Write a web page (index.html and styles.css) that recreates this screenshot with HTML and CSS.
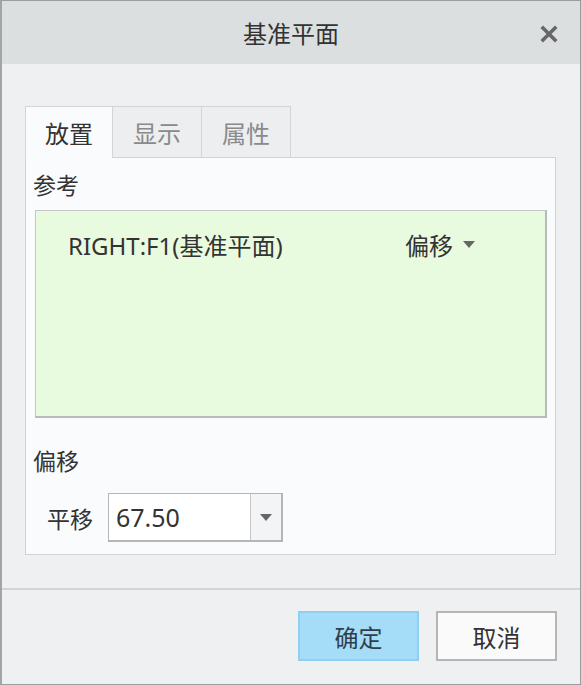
FILE: index.html
```html
<!DOCTYPE html>
<html>
<head>
<meta charset="utf-8">
<link rel="stylesheet" href="styles.css">
</head>
<body>
<div class="dialog">
  <div class="titlebar">
    <span class="title">基准平面</span>
    <span class="close">
      <svg width="18" height="18" viewBox="0 0 18 18"><path d="M3 3 L15 15 M15 3 L3 15" stroke="#676767" stroke-width="3.6" stroke-linecap="square"/></svg>
    </span>
  </div>
  <div class="content">
    <div class="tabs">
      <div class="tab active">放置</div>
      <div class="tab">显示</div>
      <div class="tab">属性</div>
    </div>
    <div class="panel">
      <div class="label">参考</div>
      <div class="refbox">
        <div class="refrow">
          <span class="refname">RIGHT:F1(基准平面)</span>
          <span class="refmode">偏移 <span class="tri"></span></span>
        </div>
      </div>
      <div class="label offset-label">偏移</div>
      <div class="offset-row">
        <span class="offset-name">平移</span>
        <div class="combo">
          <span class="combo-value">67.50</span>
          <span class="combo-btn"><span class="tri"></span></span>
        </div>
      </div>
    </div>
  </div>
  <div class="footer">
    <button class="btn primary">确定</button>
    <button class="btn">取消</button>
  </div>
</div>
</body>
</html>
```
FILE: styles.css
```css
* { box-sizing: border-box; }
html, body { margin: 0; padding: 0; }
body {
  width: 581px;
  height: 685px;
  font-family: "Noto Sans", "Noto Sans CJK SC", sans-serif;
  color: #333;
  background: #eff0f2;
}
.dialog {
  width: 581px;
  height: 685px;
  border: 1px solid #9c9c9c;
  border-left: 2px solid #a4a4a4;
  display: flex;
  flex-direction: column;
  background: #eff0f2;
}
.titlebar {
  height: 63px;
  flex: none;
  background: #dcdfe0;
  display: flex;
  align-items: center;
  justify-content: center;
  position: relative;
}
.title {
  font-family: "Noto Sans CJK SC", sans-serif;
  font-size: 24px;
  color: #333;
}
.close {
  position: absolute;
  right: 22px;
  top: 24px;
  width: 18px;
  height: 18px;
  display: block;
}
.close svg { display: block; }
.content {
  flex: none;
  padding: 42px 23px 0 23px;
}
.tabs {
  display: flex;
  height: 51px;
  position: relative;
  z-index: 1;
}
.tab {
  width: 90px;
  height: 51px;
  border: 1px solid #d2d4d6;
  border-bottom: none;
  margin-right: -1px;
  background: #eceef0;
  color: #8a8a8a;
  font-family: "Noto Sans CJK SC", sans-serif;
  font-size: 24px;
  display: flex;
  align-items: center;
  justify-content: center;
}
.tab:first-child { width: 88px; }
.tab.active {
  background: #fafbfc;
  color: #333;
  height: 52px;
}
.panel {
  height: 398px;
  background: #fafbfc;
  border: 1px solid #d0d2d4;
  margin-right: 1px;
  padding: 9px 8px 0 9px;
}
.label {
  font-family: "Noto Sans CJK SC", sans-serif;
  font-size: 23px;
  color: #333;
  height: 34px;
  line-height: 34px;
  margin-left: -2px;
}
.refbox {
  margin-top: 9px;
  height: 208px;
  background: #e9fbdf;
  border-style: solid;
  border-width: 1px 2px 2px 1px;
  border-color: #c4c6c7 #b7b9ba #b7b9ba #c4c6c7;
  padding: 17px 0 0 32px;
}
.refrow {
  display: flex;
  align-items: center;
  height: 32px;
  font-size: 24px;
  color: #333;
}
.refname {
  width: 337px;
  font-family: "Noto Sans", "Noto Sans CJK SC", sans-serif;
}
.refmode {
  font-family: "Noto Sans CJK SC", sans-serif;
  display: flex;
  align-items: center;
  gap: 10px;
}
.tri {
  display: inline-block;
  width: 0;
  height: 0;
  border-left: 6px solid transparent;
  border-right: 6px solid transparent;
  border-top: 7px solid #666;
}
.offset-label {
  margin-top: 25px;
}
.offset-row {
  display: flex;
  align-items: center;
  margin-top: 16px;
  padding-left: 12px;
}
.offset-name {
  font-family: "Noto Sans CJK SC", sans-serif;
  font-size: 23px;
  width: 61px;
  color: #333;
}
.combo {
  display: flex;
  width: 175px;
  height: 49px;
  border-style: solid;
  border-width: 1px 2px 2px 1px;
  border-color: #b3b5b7;
  background: #fff;
}
.combo-value {
  flex: 1;
  display: flex;
  align-items: center;
  padding-left: 7px;
  font-family: "Noto Sans", sans-serif;
  font-size: 25px;
  color: #333;
}
.combo-btn {
  width: 31px;
  border-left: 1px solid #c4c6c8;
  background: #f3f4f5;
  display: flex;
  align-items: center;
  justify-content: center;
}
.footer {
  margin-top: 33px;
  border-top: 2px solid #d2d4d6;
  flex: 1;
  display: flex;
  justify-content: flex-end;
  align-items: flex-start;
  padding: 21px 23px 0 0;
  gap: 17px;
}
.btn {
  width: 121px;
  height: 50px;
  font-family: "Noto Sans CJK SC", sans-serif;
  font-size: 24px;
  color: #333;
  background: #fafafa;
  border: 2px solid #b5b5b5;
  padding: 0;
}
.btn.primary {
  background: #a5dcf8;
  border-color: #8fd0f2;
  color: #2f3f4a;
}
```
